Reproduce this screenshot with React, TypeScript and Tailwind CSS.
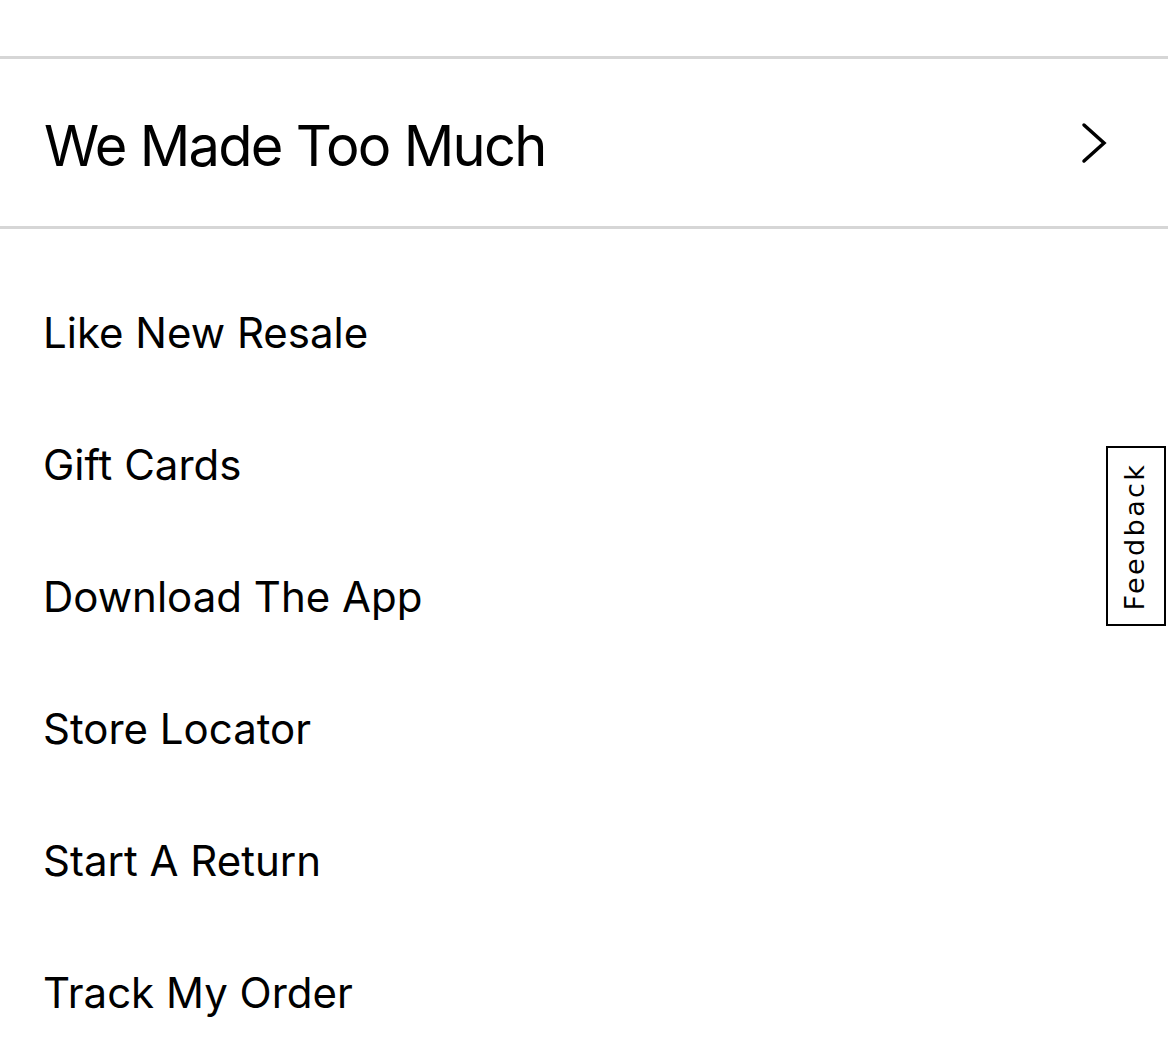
import React from "react";

const items = [
  "Like New Resale",
  "Gift Cards",
  "Download The App",
  "Store Locator",
  "Start A Return",
  "Track My Order",
];

export default function App() {
  return (
    <div
      className="relative w-[1168px] h-[1048px] bg-white text-black overflow-hidden"
      style={{ fontFamily: "Inter, 'Noto Sans', sans-serif" }}
    >
      <div className="h-[56px]" />
      <div className="border-y-[3px] border-[#d6d6d6] h-[173px] flex items-center justify-between pl-[44px] pr-[60px]">
        <span className="text-[56px] leading-none tracking-[-1.7px] pt-[6px]">We Made Too Much</span>
        <svg width="28" height="44" viewBox="0 0 28 44" fill="none">
          <path d="M4 4 L24 22 L4 40" stroke="black" strokeWidth="3.5" strokeLinecap="round" strokeLinejoin="miter" />
        </svg>
      </div>
      <div className="flex flex-col pl-[43px] pt-[83px]">
        {items.map((t) => (
          <div key={t} className="h-[132px] flex items-start">
            <span className="text-[42px] leading-none">{t}</span>
          </div>
        ))}
      </div>
      <div className="absolute left-[1106px] top-[446px] w-[60px] h-[180px] border-2 border-black bg-white flex items-center justify-center">
        <span
          className="-rotate-90 whitespace-nowrap text-[27px] leading-none tracking-[2.4px] pb-[2px]"
          style={{ fontFamily: "'DejaVu Sans', Verdana, sans-serif" }}
        >
          Feedback
        </span>
      </div>
    </div>
  );
}
